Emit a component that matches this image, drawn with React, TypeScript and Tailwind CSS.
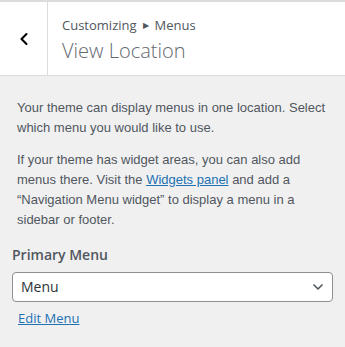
import { ChevronLeft, ChevronDown } from "lucide-react"

export default function App() {
  return (
    <div className="w-[345px] h-[347px] bg-[#f0f0f1] overflow-hidden">
      {/* header */}
      <div className="flex h-[76px] bg-white border-t-2 border-b border-[#dcdcde] font-['Open_Sans',sans-serif]">
        <button className="w-[48px] flex items-center justify-center border-r border-[#dcdcde] text-black">
          <ChevronLeft className="w-5 h-5" strokeWidth={2.5} />
        </button>
        <div className="pl-[14px] pt-[13px]">
          <div className="text-[13px] leading-[20px] text-[#50575e] flex items-center gap-[6px]">
            <span>Customizing</span>
            <span className="text-[8px]">▶</span>
            <span>Menus</span>
          </div>
          <h1 className="text-[20px] leading-[28px] font-light text-[#646970] mt-[2px]">View Location</h1>
        </div>
      </div>

      <div className="px-[12px] pt-[22px] text-[13px] leading-[20px] text-[#50575e] font-['Liberation_Sans',Arial,sans-serif]">
        <p className="px-[5px]">Your theme can display menus in one location. Select which menu you would like to use.</p>
        <p className="px-[5px] mt-[12px]">
          If your theme has widget areas, you can also add menus there. Visit the{" "}
          <a className="text-[#2271b1] underline">Widgets panel</a> and add a “Navigation Menu widget” to display a menu in a
          sidebar or footer.
        </p>

        <div className="mt-[15px] font-['Open_Sans',sans-serif]">
          <div className="text-[14px] leading-[20px] font-semibold text-[#50575e]">Primary Menu</div>
          <div className="mt-[7px] h-[30px] bg-white border border-[#8c8f94] rounded-[4px] flex items-center justify-between pl-[8px] pr-[6px] text-[14px] text-[#2c3338]">
            <span>Menu</span>
            <ChevronDown className="w-4 h-4 text-[#50575e]" strokeWidth={2.5} />
          </div>
          <a className="block mt-[4px] ml-[6px] text-[13px] leading-[24px] text-[#2271b1] underline">Edit Menu</a>
        </div>
      </div>
    </div>
  )
}
